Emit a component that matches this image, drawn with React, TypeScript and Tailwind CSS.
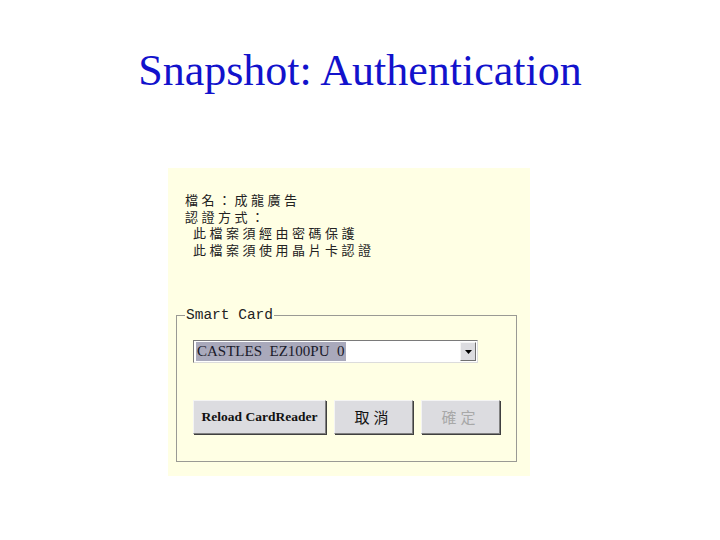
import React from "react";

const cjk = "font-['Noto_Sans_CJK_TC','Noto_Sans_CJK_SC',sans-serif]";

const WinButton: React.FC<{ children: React.ReactNode; className?: string; disabled?: boolean }> = ({
  children,
  className = "",
  disabled,
}) => (
  <button
    disabled={disabled}
    className={`h-[34px] bg-[#dcdce0] border border-t-[#f4f4f4] border-l-[#f4f4f4] border-r-[#808080] border-b-[#808080] shadow-[1px_1px_0_#404040] flex items-center justify-center ${className}`}
  >
    {children}
  </button>
);

const App: React.FC = () => {
  return (
    <div className="w-[720px] h-[540px] bg-white overflow-hidden">
      {/* slide title */}
      <h1 className="pt-[44px] text-center text-[44px] leading-[54px] text-[#1212cc] font-['Liberation_Serif',serif]">
        Snapshot: Authentication
      </h1>

      {/* dialog snapshot */}
      <div className="ml-[168px] mt-[70px] w-[362px] h-[308px] bg-[#ffffe4] pt-[24px]">
        <div className={`pl-[17px] text-[13px] leading-[16.5px] tracking-[3.5px] text-[#222] ${cjk}`}>
          <div>檔名：成龍廣告</div>
          <div>認證方式：</div>
          <div className="pl-[8px]">此檔案須經由密碼保護</div>
          <div className="pl-[8px]">此檔案須使用晶片卡認證</div>
        </div>

        <fieldset className="ml-[8px] mt-[49px] w-[340px] h-[155px] border border-[#9a9a94] px-[16px] pt-0 pb-0">
          <legend className="ml-[-8px] px-[1px] text-[14.5px] leading-[16px] text-[#222] font-['Liberation_Mono',monospace]">
            Smart Card
          </legend>

          <div className="mt-[17px] w-[285px] h-[23px] flex items-center bg-white border border-t-[#7a7a7a] border-l-[#7a7a7a] border-r-[#dcdcdc] border-b-[#dcdcdc]">
            <span className="ml-[2px] px-[1px] h-[19px] bg-[#a9a9bb] text-[15px] leading-[19px] text-[#1a1a2a] font-['Liberation_Serif',serif]">
              CASTLES&nbsp; EZ100PU&nbsp; 0
            </span>
            <div className="ml-auto mr-[1px] w-[16px] h-[19px] bg-[#dcdce0] border border-t-[#f4f4f4] border-l-[#f4f4f4] border-r-[#707070] border-b-[#707070] flex items-center justify-center">
              <svg width="7" height="4" viewBox="0 0 7 4">
                <polygon points="0,0 7,0 3.5,4" fill="#000" />
              </svg>
            </div>
          </div>

          <div className="mt-[37px] flex gap-[8px]">
            <WinButton className="w-[133px]">
              <span className="text-[13.5px] font-bold text-[#111] font-['Liberation_Serif',serif]">
                Reload CardReader
              </span>
            </WinButton>
            <WinButton className="w-[79px]">
              <span className={`text-[15px] tracking-[4px] text-[#111] ${cjk}`}>取消</span>
            </WinButton>
            <WinButton className="w-[79px]" disabled>
              <span className={`text-[15px] tracking-[4px] text-[#a8a8a8] ${cjk}`}>確定</span>
            </WinButton>
          </div>
        </fieldset>
      </div>
    </div>
  );
};

export default App;
